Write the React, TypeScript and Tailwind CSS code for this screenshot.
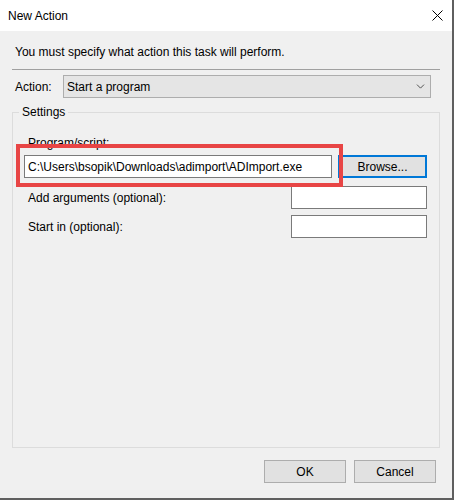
import { ChevronDown } from 'lucide-react'

const TextBox = ({ value, className }: { value?: string; className: string }) => (
  <div className={`flex h-[23px] items-center border border-[#7a7a7a] bg-white px-[3px] ${className}`}>
    {value && <span className="whitespace-nowrap">{value}</span>}
  </div>
)

const Button = ({ label, className }: { label: string; className: string }) => (
  <button
    className={`flex h-[23px] items-center justify-center bg-[#e1e1e1] text-[12px] text-black ${className}`}
    type="button"
  >
    {label}
  </button>
)

const App = () => {
  return (
    <div
      className="relative flex h-[500px] w-[454px] flex-col border-r-2 border-b-2 border-[#5f5f5f] bg-[#f0f0f0] text-[12px] leading-[16px] text-black"
      style={{ fontFamily: '"Liberation Sans", Arial, sans-serif' }}
    >
      <div className="flex h-[31px] shrink-0 items-center justify-between bg-white pl-2 pr-[9px]">
        <span className="text-[12px]">New Action</span>
        <svg width="11" height="11" viewBox="0 0 11 11" className="text-black">
          <path d="M0.5 0.5 L10.5 10.5 M10.5 0.5 L0.5 10.5" stroke="currentColor" strokeWidth="1" />
        </svg>
      </div>

      <div className="flex flex-1 flex-col px-3">
        <p className="mt-[13px] pl-[3px]">You must specify what action this task will perform.</p>
        <div className="mt-[9px] h-px w-[428px] bg-[#a0a0a0]" />

        <div className="mt-[5px] flex items-center pl-[3px]">
          <span className="w-[48px]">Action:</span>
          <div className="flex h-[23px] w-[368px] items-center justify-between border border-[#adadad] bg-[#e5e5e5] pl-[3px] pr-[3px]">
            <span>Start a program</span>
            <ChevronDown size={13} strokeWidth={1.6} className="text-[#3c3c3c]" />
          </div>
        </div>

        <fieldset className="mt-[6px] h-[344px] w-[428px] border border-[#dcdcdc] p-0">
          <legend className="ml-[6px] px-[3px] leading-[16px]">Settings</legend>
          <div className="flex flex-col pt-[15px] pr-[12px]">
            <span className="pl-[15px]">Program/script:</span>
            <div className="mt-[4px] flex items-center pl-[11px]">
              <TextBox value="C:\Users\bsopik\Downloads\adimport\ADImport.exe" className="w-[308px]" />
              <Button label="Browse..." className="ml-[6px] w-[89px] border-2 border-[#0078d7]" />
            </div>
            <div className="mt-[8px] flex items-center justify-between pl-[15px]">
              <span>Add arguments (optional):</span>
              <TextBox className="w-[136px]" />
            </div>
            <div className="mt-[6px] flex items-center justify-between pl-[15px]">
              <span>Start in (optional):</span>
              <TextBox className="w-[136px]" />
            </div>
          </div>
        </fieldset>

        <div className="mt-[12px] flex justify-end gap-[8px] pr-[4px]">
          <Button label="OK" className="w-[82px] border border-[#adadad]" />
          <Button label="Cancel" className="w-[82px] border border-[#adadad]" />
        </div>
      </div>

      {/* red highlight around the program path */}
      <div className="pointer-events-none absolute top-[144px] left-[16px] h-[43px] w-[327px] border-4 border-[#e84545]" />
    </div>
  )
}

export default App
